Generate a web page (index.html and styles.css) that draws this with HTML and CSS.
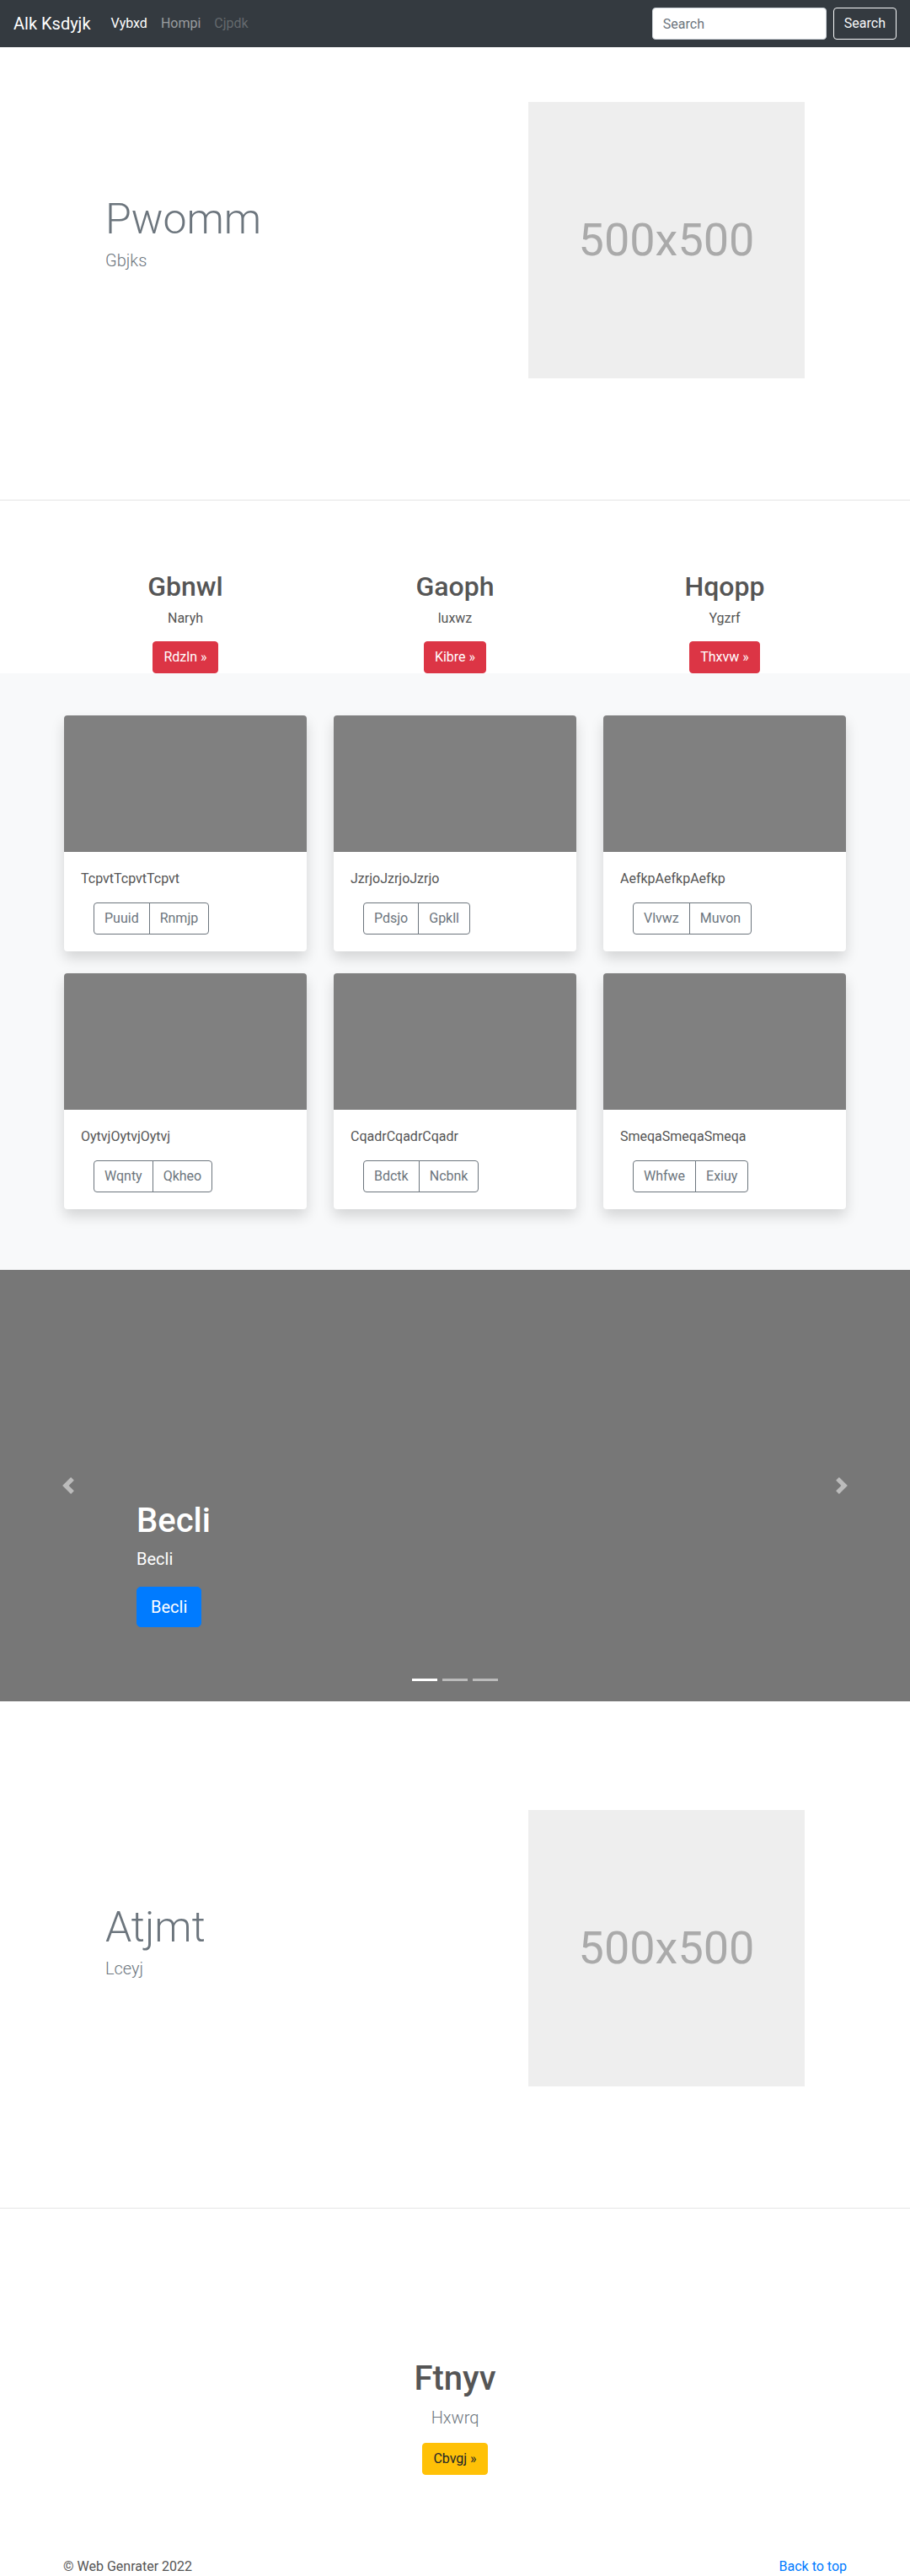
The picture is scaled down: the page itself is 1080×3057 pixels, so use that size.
FILE: index.html
```html
<!DOCTYPE html>
<html lang="en">
<head>
<meta charset="utf-8">
<title>Alk Ksdyjk</title>
<link rel="stylesheet" href="styles.css">
</head>
<body>
<header class="navbar">
  <a class="brand" href="#">Alk Ksdyjk</a>
  <nav class="nav">
    <a class="nav-link active" href="#">Vybxd</a>
    <a class="nav-link" href="#">Hompi</a>
    <a class="nav-link disabled" href="#">Cjpdk</a>
  </nav>
  <form class="search">
    <input class="search-input" type="text" placeholder="Search">
    <button class="search-btn" type="button">Search</button>
  </form>
</header>

<section class="hero">
  <div class="hero-inner">
    <div class="hero-text">
      <h1 class="hero-title">Pwomm</h1>
      <p class="hero-lead">Gbjks</p>
    </div>
    <div class="hero-media">
      <div class="placeholder">500x500</div>
    </div>
  </div>
</section>

<section class="features">
  <div class="features-inner">
    <div class="feature">
      <h2 class="feature-title">Gbnwl</h2>
      <p class="feature-text">Naryh</p>
      <a class="btn btn-danger" href="#">Rdzln &raquo;</a>
    </div>
    <div class="feature">
      <h2 class="feature-title">Gaoph</h2>
      <p class="feature-text">luxwz</p>
      <a class="btn btn-danger" href="#">Kibre &raquo;</a>
    </div>
    <div class="feature">
      <h2 class="feature-title">Hqopp</h2>
      <p class="feature-text">Ygzrf</p>
      <a class="btn btn-danger" href="#">Thxvw &raquo;</a>
    </div>
  </div>
</section>

<section class="album">
  <div class="album-grid">
    <div class="card">
      <div class="card-img"></div>
      <div class="card-body">
        <p class="card-text">TcpvtTcpvtTcpvt</p>
        <div class="btn-group"><a class="btn btn-outline" href="#">Puuid</a><a class="btn btn-outline" href="#">Rnmjp</a></div>
      </div>
    </div>
    <div class="card">
      <div class="card-img"></div>
      <div class="card-body">
        <p class="card-text">JzrjoJzrjoJzrjo</p>
        <div class="btn-group"><a class="btn btn-outline" href="#">Pdsjo</a><a class="btn btn-outline" href="#">Gpkll</a></div>
      </div>
    </div>
    <div class="card">
      <div class="card-img"></div>
      <div class="card-body">
        <p class="card-text">AefkpAefkpAefkp</p>
        <div class="btn-group"><a class="btn btn-outline" href="#">Vlvwz</a><a class="btn btn-outline" href="#">Muvon</a></div>
      </div>
    </div>
    <div class="card">
      <div class="card-img"></div>
      <div class="card-body">
        <p class="card-text">OytvjOytvjOytvj</p>
        <div class="btn-group"><a class="btn btn-outline" href="#">Wqnty</a><a class="btn btn-outline" href="#">Qkheo</a></div>
      </div>
    </div>
    <div class="card">
      <div class="card-img"></div>
      <div class="card-body">
        <p class="card-text">CqadrCqadrCqadr</p>
        <div class="btn-group"><a class="btn btn-outline" href="#">Bdctk</a><a class="btn btn-outline" href="#">Ncbnk</a></div>
      </div>
    </div>
    <div class="card">
      <div class="card-img"></div>
      <div class="card-body">
        <p class="card-text">SmeqaSmeqaSmeqa</p>
        <div class="btn-group"><a class="btn btn-outline" href="#">Whfwe</a><a class="btn btn-outline" href="#">Exiuy</a></div>
      </div>
    </div>
  </div>
</section>

<section class="carousel">
  <a class="ctrl ctrl-prev" href="#" aria-label="Previous">
    <svg viewBox="0 0 8 8" fill="#fff"><path d="M5.25 0l-4 4 4 4 1.5-1.5L4.25 4l2.5-2.5L5.25 0z"/></svg>
  </a>
  <div class="caption">
    <h1 class="caption-title">Becli</h1>
    <p class="caption-text">Becli</p>
    <a class="btn btn-lg btn-primary" href="#">Becli</a>
  </div>
  <a class="ctrl ctrl-next" href="#" aria-label="Next">
    <svg viewBox="0 0 8 8" fill="#fff"><path d="M2.75 0l-1.5 1.5L3.75 4l-2.5 2.5L2.75 8l4-4-4-4z"/></svg>
  </a>
  <div class="indicators"><span class="active"></span><span></span><span></span></div>
</section>

<section class="hero">
  <div class="hero-inner">
    <div class="hero-text">
      <h1 class="hero-title">Atjmt</h1>
      <p class="hero-lead">Lceyj</p>
    </div>
    <div class="hero-media">
      <div class="placeholder">500x500</div>
    </div>
  </div>
</section>

<section class="cta">
  <h1 class="cta-title">Ftnyv</h1>
  <p class="cta-lead">Hxwrq</p>
  <a class="btn btn-warning" href="#">Cbvgj &raquo;</a>
</section>

<footer class="footer">
  <p class="copy">&copy; Web Genrater 2022</p>
  <p><a href="#">Back to top</a></p>
</footer>
</body>
</html>
```

FILE: styles.css
```css
* { box-sizing: border-box; }
body {
  margin: 0;
  font-family: "Segoe UI", Roboto, "Noto Sans", sans-serif;
  font-size: 16px;
  line-height: 1.5;
  color: #212529;
  background: #fff;
}
a { text-decoration: none; }

/* navbar */
.navbar {
  display: flex;
  align-items: center;
  height: 56px;
  padding: 0 16px;
  background: #343a40;
}
.brand { font-size: 20px; line-height: 30px; color: #fff; margin-right: 16px; }
.nav { display: flex; }
.nav-link { padding: 0 8px; color: rgba(255,255,255,.5); }
.nav-link.active { color: #fff; }
.nav-link.disabled { color: rgba(255,255,255,.25); }
.search { margin-left: auto; display: flex; gap: 8px; margin-bottom: 0; }
.search-input {
  width: 207px; height: 38px; padding: 6px 12px;
  font: inherit; color: #495057; background: #fff;
  border: 1px solid #ced4da; border-radius: 4px;
}
.search-input::placeholder { color: #6c757d; }
.search-btn {
  height: 38px; padding: 6px 12px;
  font: inherit; color: #f8f9fa; background: transparent;
  border: 1px solid #f8f9fa; border-radius: 4px;
}

/* hero */
.hero { padding: 65px 0 144px; border-bottom: 1px solid #e5e5e5; }
.hero-inner {
  width: 960px; margin: 0 auto;
  display: grid; grid-template-columns: 1fr 1fr; align-items: center;
}
.hero-text { padding-left: 65px; }
.hero-title { margin: 0 0 4px; font-size: 50px; font-weight: 300; line-height: 1.2; color: #6c757d; }
.hero-lead { margin: 0 0 16px; font-size: 20px; font-weight: 300; color: #6c757d; }
.hero-media { padding-left: 87px; }
.placeholder {
  width: 328px; height: 328px; background: #eee;
  display: flex; align-items: center; justify-content: center;
  color: #aaa; font-size: 54px; line-height: 1;
}

/* buttons */
.btn {
  display: inline-block; padding: 6px 12px;
  font-size: 16px; line-height: 24px;
  border: 1px solid transparent; border-radius: 4px;
}
.btn-danger { background: #dc3545; border-color: #dc3545; color: #fff; }
.btn-warning { background: #ffc107; border-color: #ffc107; color: #212529; }
.btn-primary { background: #007bff; border-color: #007bff; color: #fff; }
.btn-lg { padding: 8px 16px; font-size: 20px; line-height: 30px; border-radius: 5px; }
.btn-outline { color: #6c757d; border-color: #6c757d; background: transparent; }
.btn-group { display: inline-flex; margin-left: 15px; vertical-align: top; }
.btn-group .btn:first-child { border-radius: 4px 0 0 4px; }
.btn-group .btn:last-child { border-radius: 0 4px 4px 0; margin-left: -1px; }

/* features */
.features { padding-top: 83px; }
.features-inner {
  width: 960px; margin: 0 auto;
  display: grid; grid-template-columns: repeat(3, 1fr); text-align: center;
}
.feature-title { margin: 0 0 7px; font-size: 32px; font-weight: 500; line-height: 1.2; color: #555; }
.feature-text { margin: 0 0 15px; color: #555; }
.feature .btn { vertical-align: top; }

/* album */
.album { background: #f8f9fa; padding: 50px 0 72px; }
.album-grid {
  width: 960px; margin: 0 auto; padding: 0 16px;
  display: grid; grid-template-columns: repeat(3, 1fr); gap: 26px 32px;
}
.card {
  background: #fff; border-radius: 4px; overflow: hidden;
  box-shadow: 0 8px 16px rgba(0,0,0,.15);
}
.card-img { height: 162px; background: #808080; }
.card-body { padding: 20px; }
.card-text { margin: 0 0 16px; color: #555; }
.card-body .btn-group { display: flex; width: max-content; }

/* carousel */
.carousel { position: relative; height: 512px; background: #777; margin-bottom: 64px; }
.ctrl {
  position: absolute; top: 0; bottom: 0; width: 15%;
  display: flex; align-items: center; justify-content: center; opacity: .5;
}
.ctrl-prev { left: 0; }
.ctrl-next { right: 0; }
.ctrl svg { width: 20px; height: 20px; display: block; }
.caption { position: absolute; left: 15%; right: 15%; bottom: 88px; color: #fff; }
.caption-title { margin: 0 0 6px; font-size: 40px; font-weight: 500; line-height: 1.2; }
.caption-text { margin: 0 0 18px; font-size: 20px; }
.caption .btn { vertical-align: top; }
.indicators {
  position: absolute; left: 0; right: 0; bottom: 24px;
  display: flex; justify-content: center; gap: 6px;
}
.indicators span { width: 30px; height: 3px; background: #fff; opacity: .5; }
.indicators span.active { opacity: 1; }

/* cta */
.cta { padding: 178px 0 48px; text-align: center; }
.cta-title { margin: 0 0 7px; font-size: 40px; font-weight: 500; line-height: 1.2; color: #555; }
.cta-lead { margin: 0 0 15px; font-size: 20px; font-weight: 300; color: #6c757d; }
.cta .btn { vertical-align: top; }

/* footer */
.footer {
  width: 960px; margin: 0 auto; padding: 49px 15px 48px;
  display: flex; justify-content: space-between;
}
.footer p { margin: 0 0 16px; }
.copy { color: #555; }
.footer a { color: #007bff; }
```
